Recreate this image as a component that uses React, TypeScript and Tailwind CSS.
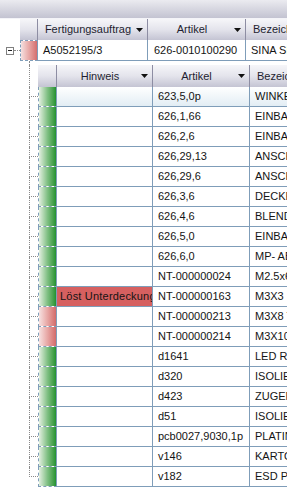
import React from "react";

type Row = { art: string; bez: string; red?: boolean; hint?: string };

const rows: Row[] = [
  { art: "623,5,0p", bez: "WINKEL" },
  { art: "626,1,66", bez: "EINBAU" },
  { art: "626,2,6", bez: "EINBAU" },
  { art: "626,29,13", bez: "ANSCHLUSS" },
  { art: "626,29,6", bez: "ANSCHLUSS" },
  { art: "626,3,6", bez: "DECKEL" },
  { art: "626,4,6", bez: "BLENDE" },
  { art: "626,5,0", bez: "EINBAU" },
  { art: "626,6,0", bez: "MP- ABDECK" },
  { art: "NT-000000024", bez: "M2.5x6" },
  { art: "NT-000000163", bez: "M3X3 ISO", hint: "Löst Unterdeckung" },
  { art: "NT-000000213", bez: "M3X8 TORX", red: true },
  { art: "NT-000000214", bez: "M3X10 TORX", red: true },
  { art: "d1641", bez: "LED REFLEKTOR" },
  { art: "d320", bez: "ISOLIERUNG" },
  { art: "d423", bez: "ZUGENTLASTUNG" },
  { art: "d51", bez: "ISOLIERUNG" },
  { art: "pcb0027,9030,1p", bez: "PLATINE" },
  { art: "v146", bez: "KARTON" },
  { art: "v182", bez: "ESD PENNY" },
];

const Arrow = () => (
  <svg width="7" height="4" viewBox="0 0 7 4" className="shrink-0">
    <polygon points="0,0 7,0 3.5,4" fill="#111" />
  </svg>
);

const hdr = "bg-linear-to-b from-[#f6f6f9] via-[#e4e4ec] to-[#c4c4d3]";

function HeaderCell({ w, label, arrow = true, last = false }: { w?: string; label: string; arrow?: boolean; last?: boolean }) {
  return (
    <div
      className={`${w ?? "flex-1"} shrink-0 flex items-center ${hdr} ${last ? "" : "border-r border-[#8d8da3]"} overflow-hidden whitespace-nowrap`}
    >
      {last ? (
        <span className="pl-[7px] text-[#1e1e30]">{label}</span>
      ) : (
        <>
          <span className="flex-1 text-center text-[#1e1e30] pl-[2px]">{label}</span>
          {arrow && (
            <span className="pr-[4px] flex items-center">
              <Arrow />
            </span>
          )}
        </>
      )}
    </div>
  );
}

const lineCol = "border-[#7f9db9]";
const dotCol = "border-[#8a8a8a]";

export default function App() {
  return (
    <div className="w-[287px] h-[493px] overflow-hidden bg-white font-['Liberation_Sans',Arial,sans-serif] text-[11px] text-[#141414] leading-none">
      {/* top band */}
      <div className="h-[18px] bg-linear-to-b from-[#ebebf0] to-[#c3c3d1]" />
      <div className="h-px bg-[#f4f4f8]" />

      {/* parent header */}
      <div className="flex h-[21px] pl-[20px]">
        <div className={`w-[18px] shrink-0 ${hdr} border-r border-[#8d8da3]`} />
        <HeaderCell w="w-[110px]" label="Fertigungsauftrag" />
        <HeaderCell w="w-[98px]" label="Artikel" />
        <HeaderCell label="Bezeichnung" last />
      </div>

      {/* parent row */}
      <div className="flex h-[21px]">
        <div className="w-[20px] shrink-0 flex items-center">
          <div className="ml-[6px] w-[8px] h-[8px] border border-[#808080] bg-white flex items-center justify-center">
            <div className="w-[4px] h-px bg-[#222]" />
          </div>
          <div className={`flex-1 border-t border-dotted ${dotCol}`} />
        </div>
        <div
          className={`w-[18px] shrink-0 border-l border-t border-b border-dashed ${lineCol} border-r-0 flex`}
        >
          <div className="flex-1 bg-linear-to-r from-[#f4e0e0] to-[#d46e6e]" />
          <div className="w-px bg-[#7f9db9]" />
        </div>
        <div className={`w-[110px] shrink-0 border-r border-b ${lineCol} flex items-center pl-[5px] whitespace-nowrap overflow-hidden`}>
          A5052195/3
        </div>
        <div className={`w-[98px] shrink-0 border-r border-b ${lineCol} flex items-center pl-[6px] whitespace-nowrap overflow-hidden`}>
          626-0010100290
        </div>
        <div className={`flex-1 border-b ${lineCol} flex items-center pl-[5px] whitespace-nowrap overflow-hidden`}>
          SINA SPANNFUTTER
        </div>
      </div>

      {/* gap */}
      <div className="flex h-[4px]">
        <div className="w-[29px] shrink-0" />
        <div className={`border-l border-dotted ${dotCol}`} />
      </div>

      {/* child header */}
      <div className="flex h-[22px]">
        <div className="w-[38px] shrink-0 flex">
          <div className="w-[29px]" />
          <div className={`border-l border-dotted ${dotCol}`} />
        </div>
        <div className={`w-[19px] shrink-0 ${hdr} border-r border-[#8d8da3]`} />
        <HeaderCell w="w-[96px]" label="Hinweis" />
        <HeaderCell w="w-[97px]" label="Artikel" />
        <HeaderCell label="Bezeichnung" last />
      </div>

      {/* child rows */}
      {rows.map((r, i) => {
        const last = i === rows.length - 1;
        const focused = i === 0;
        const cellBg = focused ? "bg-linear-to-b from-white to-[#e2edf4]" : "bg-white";
        return (
          <div key={i} className="flex h-[20px]">
            <div className="w-[38px] shrink-0 flex">
              <div className="w-[29px]" />
              <div className="flex-1 flex flex-col">
                <div className={`h-[10px] border-l border-b border-dotted ${dotCol}`} />
                <div className={`flex-1 ${last ? "" : `border-l border-dotted ${dotCol}`}`} />
              </div>
            </div>
            <div className={`w-[19px] shrink-0 flex border-l border-b border-dashed ${lineCol}`}>
              <div
                className={`flex-1 ${
                  r.red
                    ? "bg-linear-to-r from-[#f6e2e2] to-[#d26a6a]"
                    : "bg-linear-to-r from-[#e3efe1] via-[#7fbf83] to-[#1f922e]"
                }`}
              />
              <div className="w-px bg-[#7f9db9]" />
            </div>
            <div
              className={`w-[96px] shrink-0 border-r border-b ${lineCol} flex items-center whitespace-nowrap overflow-hidden ${
                r.hint ? "bg-[#d66060] pl-[3px] tracking-[0.2px]" : cellBg
              }`}
            >
              {r.hint ?? ""}
            </div>
            <div className={`w-[97px] shrink-0 border-r border-b ${lineCol} flex items-center pl-[5px] whitespace-nowrap overflow-hidden ${cellBg}`}>
              {r.art}
            </div>
            <div className={`flex-1 border-b ${lineCol} flex items-center pl-[5px] whitespace-nowrap overflow-hidden ${cellBg}`}>
              {r.bez}
            </div>
          </div>
        );
      })}
    </div>
  );
}
